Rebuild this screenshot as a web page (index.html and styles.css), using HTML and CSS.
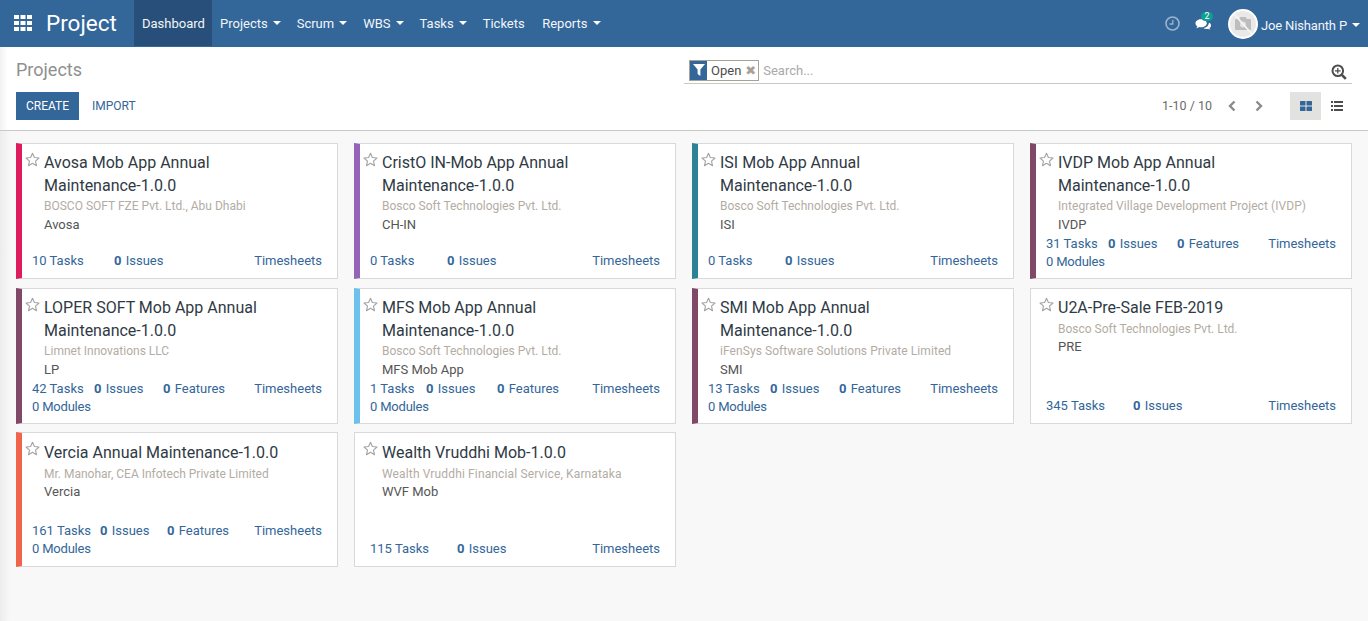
FILE: index.html
```html
<!DOCTYPE html>
<html lang="en">
<head>
<meta charset="utf-8">
<title>Project</title>
<link rel="stylesheet" href="styles.css">
</head>
<body>
<svg class="defs" width="0" height="0" aria-hidden="true"><symbol id="star" viewBox="0 0 15 15"><path d="M7.500 1.200L9.400 5.500 14 6 10.500 9.100 11.500 13.700 7.500 11.300 3.500 13.700 4.500 9.100 1 6 5.600 5.500z" fill="none" stroke="#a3a3a3" stroke-width="1.100" stroke-linejoin="round"/></symbol></svg>
<header class="navbar">
  <span class="apps" aria-label="Apps">
    <svg width="18" height="16" viewBox="0 0 18 16" fill="#fff"><rect x="0" y="0" width="5" height="4"/><rect x="6.500" y="0" width="5" height="4"/><rect x="13" y="0" width="5" height="4"/><rect x="0" y="6" width="5" height="4"/><rect x="6.500" y="6" width="5" height="4"/><rect x="13" y="6" width="5" height="4"/><rect x="0" y="12" width="5" height="4"/><rect x="6.500" y="12" width="5" height="4"/><rect x="13" y="12" width="5" height="4"/></svg>
  </span>
  <span class="brand">Project</span>
  <nav class="menu">
    <a class="item active">Dashboard</a>
    <a class="item">Projects<i class="caret"></i></a>
    <a class="item">Scrum<i class="caret"></i></a>
    <a class="item">WBS<i class="caret"></i></a>
    <a class="item">Tasks<i class="caret"></i></a>
    <a class="item tickets">Tickets</a>
    <a class="item">Reports<i class="caret"></i></a>
  </nav>
  <div class="systray">
    <svg class="clock" width="15" height="15" viewBox="0 0 15 15" fill="none" stroke="#9db4cc" stroke-width="1.600"><circle cx="7.500" cy="7.500" r="6.500"/><path d="M7.800 3.800v4.200H4.600" stroke-width="1.300"/></svg>
    <span class="chat">
      <svg width="17" height="16" viewBox="0 0 18 16" fill="#fff"><path d="M6.500 3C3 3 0.500 4.900 0.500 7.200c0 1.300.8 2.400 2 3.200-.2.8-.7 1.500-1.200 2 1.200-.1 2.400-.6 3.200-1.200.6.100 1.300.2 2 .2 3.500 0 6-1.900 6-4.200S10 3 6.500 3z"/><path d="M14.500 7.500c0 2.400-2.300 4.400-5.500 4.800.9.600 2 .9 3.200.9.500 0 1-.1 1.500-.2.600.5 1.600.9 2.600 1-.4-.4-.8-1-1-1.700 1-.7 1.700-1.700 1.700-2.800 0-1.200-.7-2.200-1.800-2.900-.2.300-.5.600-.7.900z"/></svg>
      <b class="badge">2</b>
    </span>
    <span class="avatar">
      <svg width="26" height="26" viewBox="0 0 26 26"><path d="M6 8h3l1.500-2h5L17 8h3a1 1 0 0 1 1 1v9a1 1 0 0 1-1 1H6a1 1 0 0 1-1-1V9a1 1 0 0 1 1-1z" fill="#bdbdbd"/><circle cx="13" cy="13.500" r="3" fill="#e2e2e2"/><path d="M4 3l18 20" stroke="#f6f6f6" stroke-width="1.800"/></svg>
    </span>
    <span class="user">Joe Nishanth P<i class="caret"></i></span>
  </div>
</header>

<section class="control">
  <div class="control-top">
    <h1 class="title">Projects</h1>
    <div class="search">
      <span class="facet"><span class="facet-icon"><svg width="12" height="12" viewBox="0 0 12 12" fill="#fff"><path d="M0 0h12L7.400 5.500V12L4.600 10V5.500z"/></svg></span><span class="facet-label">Open</span><span class="facet-x">✖</span></span>
      <span class="placeholder">Search...</span>
      <svg class="lens" width="16" height="16" viewBox="0 0 16 16" fill="none" stroke="#4c4c4c"><circle cx="6.800" cy="6.800" r="5.300" stroke-width="2"/><path d="M10.800 10.800l4 4" stroke-width="2.600"/><path d="M6.800 4v5.600M4 6.800h5.600" stroke-width="1.300"/></svg>
    </div>
  </div>
  <div class="control-bottom">
    <div class="buttons"><a class="btn-primary">CREATE</a><a class="btn-link">IMPORT</a></div>
    <div class="pager">
      <span class="count">1-10 / 10</span>
      <svg class="chev" width="10" height="12" viewBox="0 0 10 12" fill="none" stroke="#8a8a8a" stroke-width="2.400"><path d="M7.500 1.500L3 6l4.500 4.500"/></svg>
      <svg class="chev next" width="10" height="12" viewBox="0 0 10 12" fill="none" stroke="#8a8a8a" stroke-width="2.400"><path d="M2.500 1.500L7 6l-4.500 4.500"/></svg>
      <div class="views">
        <span class="view on"><svg width="12" height="10" viewBox="0 0 12 10" fill="#336699"><rect width="5.500" height="4.400" rx=".5"/><rect x="6.500" width="5.500" height="4.400" rx=".5"/><rect y="5.600" width="5.500" height="4.400" rx=".5"/><rect x="6.500" y="5.600" width="5.500" height="4.400" rx=".5"/></svg></span>
        <span class="view"><svg width="12" height="10" viewBox="0 0 12 10" fill="#4c4c4c"><rect width="2" height="2"/><rect x="3" width="9" height="2"/><rect y="4" width="2" height="2"/><rect x="3" y="4" width="9" height="2"/><rect y="8" width="2" height="2"/><rect x="3" y="8" width="9" height="2"/></svg></span>
      </div>
    </div>
  </div>
</section>

<main class="kanban">
  <article class="card c-pink">
    <div class="head"><svg class="star"><use href="#star"/></svg><div class="info"><h2 class="name">Avosa Mob App Annual Maintenance-1.0.0</h2><p class="partner">BOSCO SOFT FZE Pvt. Ltd., Abu Dhabi</p><p class="code">Avosa</p></div></div>
    <div class="stats p2"><a>10 Tasks</a><a><b>0</b> Issues</a><a class="s-time">Timesheets</a></div>
  </article>
  <article class="card c-purple">
    <div class="head"><svg class="star"><use href="#star"/></svg><div class="info"><h2 class="name">CristO IN-Mob App Annual Maintenance-1.0.0</h2><p class="partner">Bosco Soft Technologies Pvt. Ltd.</p><p class="code">CH-IN</p></div></div>
    <div class="stats p1"><a>0 Tasks</a><a><b>0</b> Issues</a><a class="s-time">Timesheets</a></div>
  </article>
  <article class="card c-teal">
    <div class="head"><svg class="star"><use href="#star"/></svg><div class="info"><h2 class="name">ISI Mob App Annual Maintenance-1.0.0</h2><p class="partner">Bosco Soft Technologies Pvt. Ltd.</p><p class="code">ISI</p></div></div>
    <div class="stats p1"><a>0 Tasks</a><a><b>0</b> Issues</a><a class="s-time">Timesheets</a></div>
  </article>
  <article class="card c-plum">
    <div class="head"><svg class="star"><use href="#star"/></svg><div class="info"><h2 class="name">IVDP Mob App Annual Maintenance-1.0.0</h2><p class="partner spaced">Integrated Village Development Project (IVDP)</p><p class="code">IVDP</p></div></div>
    <div class="stats f2"><a>31 Tasks</a><a><b>0</b> Issues</a><a><b>0</b> Features</a><a class="s-time">Timesheets</a><a class="s-mod">0 Modules</a></div>
  </article>
  <article class="card c-plum">
    <div class="head"><svg class="star"><use href="#star"/></svg><div class="info"><h2 class="name">LOPER SOFT Mob App Annual Maintenance-1.0.0</h2><p class="partner">Limnet Innovations LLC</p><p class="code">LP</p></div></div>
    <div class="stats f2"><a>42 Tasks</a><a><b>0</b> Issues</a><a><b>0</b> Features</a><a class="s-time">Timesheets</a><a class="s-mod">0 Modules</a></div>
  </article>
  <article class="card c-sky">
    <div class="head"><svg class="star"><use href="#star"/></svg><div class="info"><h2 class="name">MFS Mob App Annual Maintenance-1.0.0</h2><p class="partner">Bosco Soft Technologies Pvt. Ltd.</p><p class="code">MFS Mob App</p></div></div>
    <div class="stats f1"><a>1 Tasks</a><a><b>0</b> Issues</a><a><b>0</b> Features</a><a class="s-time">Timesheets</a><a class="s-mod">0 Modules</a></div>
  </article>
  <article class="card c-plum">
    <div class="head"><svg class="star"><use href="#star"/></svg><div class="info"><h2 class="name">SMI Mob App Annual Maintenance-1.0.0</h2><p class="partner spaced">iFenSys Software Solutions Private Limited</p><p class="code">SMI</p></div></div>
    <div class="stats f2"><a>13 Tasks</a><a><b>0</b> Issues</a><a><b>0</b> Features</a><a class="s-time">Timesheets</a><a class="s-mod">0 Modules</a></div>
  </article>
  <article class="card one">
    <div class="head"><svg class="star"><use href="#star"/></svg><div class="info"><h2 class="name">U2A-Pre-Sale FEB-2019</h2><p class="partner">Bosco Soft Technologies Pvt. Ltd.</p><p class="code">PRE</p></div></div>
    <div class="stats p3"><a>345 Tasks</a><a><b>0</b> Issues</a><a class="s-time">Timesheets</a></div>
  </article>
  <article class="card c-coral one last">
    <div class="head"><svg class="star"><use href="#star"/></svg><div class="info"><h2 class="name">Vercia Annual Maintenance-1.0.0</h2><p class="partner">Mr. Manohar, CEA Infotech Private Limited</p><p class="code">Vercia</p></div></div>
    <div class="stats f3"><a>161 Tasks</a><a><b>0</b> Issues</a><a><b>0</b> Features</a><a class="s-time">Timesheets</a><a class="s-mod">0 Modules</a></div>
  </article>
  <article class="card one last">
    <div class="head"><svg class="star"><use href="#star"/></svg><div class="info"><h2 class="name">Wealth Vruddhi Mob-1.0.0</h2><p class="partner spaced-more">Wealth Vruddhi Financial Service, Karnataka</p><p class="code">WVF Mob</p></div></div>
    <div class="stats p3"><a>115 Tasks</a><a><b>0</b> Issues</a><a class="s-time">Timesheets</a></div>
  </article>
</main>
</body>
</html>
```

FILE: styles.css
```css
* { box-sizing: border-box; }
html, body { margin: 0; height: 100%; }
body {
  height: 621px;
  overflow: hidden;
  font-family: Roboto, "Liberation Sans", sans-serif;
  font-size: 13px;
  color: #4c4c4c;
  background: #f8f8f8;
  display: flex;
  flex-direction: column;
}
.defs { position: absolute; }
.navbar {
  height: 47px;
  flex: none;
  background: #336699;
  color: #fff;
  display: flex;
  align-items: center;
  padding-left: 14px;
}
.apps { display: flex; width: 32px; margin-top: -1px; }
.brand { font-size: 22.5px; width: 88px; color: #fff; margin-top: -1px; }
.menu { display: flex; height: 46px; align-self: flex-start; }
.item {
  display: flex;
  align-items: center;
  padding: 0 8px;
  color: #f2f5f9;
  font-size: 13px;
  height: 46px;
}
.item.active { background: #284f7a; width: 78px; padding-right: 0; }
.tickets { padding-right: 9.500px; }
.caret {
  display: inline-block;
  width: 0; height: 0;
  margin-left: 5px;
  border-left: 4px solid transparent;
  border-right: 4px solid transparent;
  border-top: 4px solid #fff;
}
.systray { margin-left: auto; display: flex; align-items: center; padding-right: 8px; }
.clock { margin-right: 15px; }
.chat { position: relative; display: flex; margin-right: 16px; }
.badge {
  position: absolute;
  top: -4px; right: -1px;
  width: 12px; height: 9px;
  border-radius: 5px;
  background: #0f9d94;
  color: #fff;
  font-size: 9px;
  font-weight: 400;
  line-height: 9px;
  text-align: center;
}
.avatar {
  width: 30px; height: 30px;
  border-radius: 50%;
  background: #e9e9e9;
  border: 2px solid #fff;
  display: flex;
  align-items: center;
  justify-content: center;
  overflow: hidden;
  margin-right: 3px;
}
.user { font-size: 13px; color: #f2f5f9; letter-spacing: -.15px; padding-top: 3px; display: flex; align-items: center; }
.control {
  flex: none;
  height: 84px;
  background: linear-gradient(to right, #f2f2f2, #fff 8px);
  border-bottom: 1px solid #c9c9c9;
  padding: 0 16px;
}
.control-top { display: flex; justify-content: space-between; height: 37px; }
.title { margin: 0; font-size: 18px; font-weight: 400; color: #8f8f8f; line-height: 46px; }
.search {
  width: 668px;
  height: 37px;
  display: flex;
  align-items: center;
  border-bottom: 1px solid #c9c9c9;
  padding: 10px 0 0 5px;
  position: relative;
}
.facet { display: flex; align-items: center; height: 21px; border: 1px solid #a8a196; background: #fff; }
.facet-icon { width: 17px; height: 19px; background: #336699; display: flex; align-items: center; justify-content: center; }
.facet-label { padding: 0 4px 0 4px; color: #4c4c4c; font-size: 13px; }
.facet-x { font-size: 13px; line-height: 19px; color: #a8a196; padding-right: 2px; font-family: "DejaVu Sans", sans-serif; }
.placeholder { margin-left: 4px; color: #a9a9a9; font-size: 13px; }
.lens { margin-left: auto; margin-right: 5px; margin-top: 3px; }
.control-bottom { display: flex; justify-content: space-between; align-items: flex-start; padding-top: 8px; }
.buttons { display: flex; align-items: center; }
.btn-primary {
  display: block;
  width: 63px; height: 28px;
  background: #336699;
  color: #fff;
  font-size: 12px;
  line-height: 28px;
  text-align: center;
}
.btn-link { margin-left: 13px; color: #336699; font-size: 12px; }
.pager { display: flex; align-items: center; height: 28px; }
.count { color: #6b6b6b; font-size: 12.500px; margin-right: 15px; padding-bottom: 1px; }
.chev { margin-right: 17px; }
.next { margin-right: 26px; }
.views { display: flex; }
.view { width: 31px; height: 28px; display: flex; align-items: center; justify-content: center; }
.view.on { background: #e2e2e0; }
.kanban {
  flex: 1;
  display: grid;
  grid-template-columns: repeat(4, 322px);
  grid-template-rows: 136px 136px 134px;
  column-gap: 16px;
  row-gap: 9px;
  align-content: start;
  padding: 12px 0 0 16px;
  background: linear-gradient(to right, #ececec, #f8f8f8 10px);
}
.card {
  background: #fff;
  border: 1px solid #d9d9d9;
  border-left: 6px solid transparent;
  display: flex;
  flex-direction: column;
  padding: 0 15px 0 0;
}
.card:not([class*="c-"]) { border-left: 1px solid #d9d9d9; padding-left: 5px; }
.card.last { margin-top: -1px; }
.last .info { padding-top: 8px; }
.c-pink { border-left-color: #dc1c5c; }
.c-purple { border-left-color: #9365b8; }
.c-teal { border-left-color: #2c8397; }
.c-plum { border-left-color: #804967; }
.c-sky { border-left-color: #6cc1ed; }
.c-coral { border-left-color: #f0644c; }
.head { display: flex; flex: 1; }
.star {
  width: 15px;
  height: 15px;
  flex: none;
  margin: 8px 4px 0 3px;
}
.info { flex: 1; min-width: 0; padding-top: 7px; }
.name { margin: 0; font-size: 16px; font-weight: 400; line-height: 23px; color: #2f3a45; padding-right: 40px; }
.partner { margin: 0; font-size: 12px; line-height: 18px; color: #b3aca4; }
.spaced { letter-spacing: .07px; }
.spaced-more { letter-spacing: .14px; }
.one .partner { padding-top: 1px; margin-bottom: -1px; }
.code { margin: 0; font-size: 13px; line-height: 20px; color: #555; }
.stats {
  display: grid;
  padding-left: 10px;
  font-size: 13px;
  line-height: 18px;
  color: #336699;
  padding-bottom: 8px;
  align-items: end;
}
.p1 { grid-template-columns: 77px 1fr auto; }
.p2 { grid-template-columns: 82px 1fr auto; }
.p3 { grid-template-columns: 87px 1fr auto; }
.f1 { grid-template-columns: 56px 71px 1fr auto; }
.f2 { grid-template-columns: 62px 69px 1fr auto; }
.f3 { grid-template-columns: 68px 67px 1fr auto; }
.stats a { white-space: nowrap; color: #336699; }
.stats b { font-weight: 700; margin-right: 1px; }
.stats .s-mod { grid-column: 1 / -1; letter-spacing: -.2px; }
```
